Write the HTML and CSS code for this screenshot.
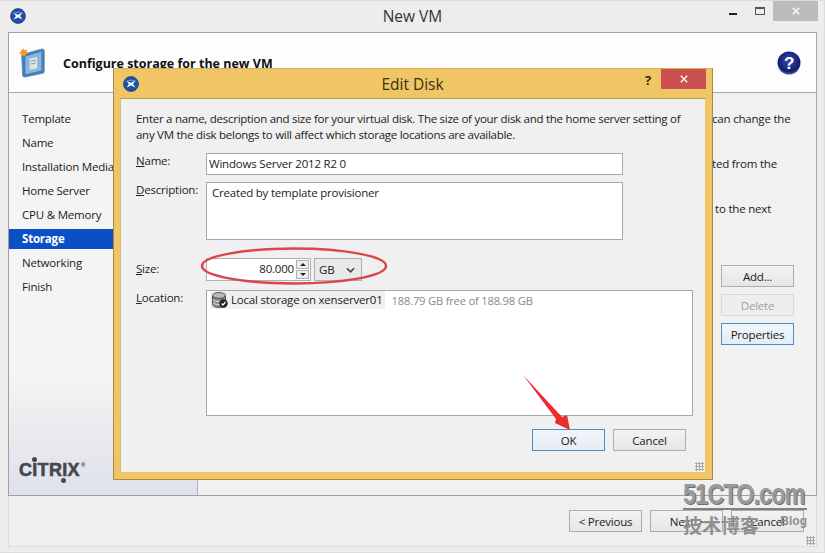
FILE: index.html
```html
<!DOCTYPE html>
<html lang="en">
<head>
    <meta charset="UTF-8">
    <title>New VM</title>
    <link rel="stylesheet" href="styles.css">
</head>
<body>
    <!-- Main wizard window -->
    <div class="window">
        <div class="titlebar">
            <svg class="app-icon" viewBox="0 0 16 16">
                <use href="#xen-logo"></use>
            </svg>
            <span class="title">New VM</span>
            <div class="controls">
                <span class="ctl-min"></span>
                <span class="ctl-max"></span>
                <span class="ctl-close">
                    <svg viewBox="0 0 10 10"><path d="M1 1L9 9M9 1L1 9"></path></svg>
                </span>
            </div>
        </div>

        <div class="panel">
            <div class="page-head">
                <svg class="page-icon" viewBox="0 0 28 32">
                    <path d="M3 7L25 1Q27 1 27 3V25Q27 27 25 27L6 31Q4 31 4 29Z" fill="#3f7fc0" stroke="#6f8598"></path>
                    <path d="M7 9L24 4V24L7 28Z" fill="#86b8e2"></path>
                    <path d="M11 11L20 9V22L11 24Z" fill="#d9e4ea" stroke="#8fa3b3" stroke-width=".6"></path>
                    <path d="M13 14L18 13M13 17L18 16" stroke="#7d93a6"></path>
                    <path d="M5 0L6 2.500L9 1.500L8 4L10 5.500L7.500 6.500L7 9L4.500 8L2 9L2.500 6.500L0 5L2.500 4L2 1.500L4 2.500Z" fill="#f09a2a"></path>
                </svg>
                <h1>Configure storage for the new VM</h1>
                <svg class="help-icon" viewBox="0 0 24 24">
                    <defs>
                        <radialGradient id="helpball" cx=".5" cy=".4" r=".6">
                            <stop offset="0" stop-color="#3a4fb0"></stop>
                            <stop offset=".8" stop-color="#101d72"></stop>
                            <stop offset="1" stop-color="#5a6a98"></stop>
                        </radialGradient>
                    </defs>
                    <circle cx="12" cy="12" r="11.5" fill="url(#helpball)"></circle>
                    <text x="12" y="18" text-anchor="middle" class="help-mark">?</text>
                </svg>
            </div>

            <div class="page-body">
                <div class="sidebar">
                    <ul class="steps">
                        <li>Template</li>
                        <li>Name</li>
                        <li>Installation Media</li>
                        <li>Home Server</li>
                        <li>CPU &amp; Memory</li>
                        <li class="active">Storage</li>
                        <li>Networking</li>
                        <li>Finish</li>
                    </ul>
                    <div class="citrix">
                        <span class="dot-top"></span>CITRIX<span class="dot-bottom"></span><sup>®</sup>
                    </div>
                </div>
                <div class="content">
                    <p class="hint">can change the</p>
                    <p class="hint hint-b">ted from the</p>
                    <p class="hint hint-c">to the next</p>
                    <div class="side-buttons">
                        <button class="btn">Add...</button>
                        <button class="btn disabled">Delete</button>
                        <button class="btn focus">Properties</button>
                    </div>
                </div>
            </div>
        </div>

        <div class="footer">
            <button class="btn">&lt; Previous</button>
            <button class="btn">Next &gt;</button>
            <button class="btn">Cancel</button>
            <span class="grip"></span>
        </div>
    </div>

    <!-- Edit Disk dialog, floats over the wizard -->
    <div class="dialog">
        <div class="dialog-title">
            <svg class="app-icon" viewBox="0 0 16 16">
                <use href="#xen-logo"></use>
            </svg>
            <span class="title">Edit Disk</span>
            <span class="dlg-help">?</span>
            <span class="dlg-close">
                <svg viewBox="0 0 10 10"><path d="M1 1L9 9M9 1L1 9"></path></svg>
            </span>
        </div>
        <div class="dialog-body">
            <p class="intro">Enter a name, description and size for your virtual disk. The size of your disk and the home server setting of any VM the disk belongs to will affect which storage locations are available.</p>
            <div class="form">
                <label><u>N</u>ame:</label>
                <div class="field field-name">Windows Server 2012 R2 0</div>
                <label><u>D</u>escription:</label>
                <div class="field field-desc">Created by template provisioner</div>
                <label class="label-size"><u>S</u>ize:</label>
                <div class="size-row">
                    <div class="spin">
                        <span class="spin-value">80.000</span>
                        <span class="spin-arrows"><i class="up"></i><i class="down"></i></span>
                    </div>
                    <div class="select">GB
                        <svg viewBox="0 0 10 6"><path d="M1 1L5 5L9 1"></path></svg>
                    </div>
                </div>
                <label class="label-loc"><u>L</u>ocation:</label>
                <div class="field field-loc">
                    <div class="loc-row">
                        <span class="loc-name">
                            <svg class="disk-icon" viewBox="0 0 16 16">
                                <ellipse cx="7" cy="3.5" rx="6.5" ry="3" fill="#b9b9b9" stroke="#555"></ellipse>
                                <path d="M.5 3.5V12.5C.5 14 3 15.5 7 15.5S13.500 14 13.500 12.500V3.500C13.500 5 11 6.500 7 6.500S.5 5 .5 3.500Z" fill="#8c8c8c" stroke="#555"></path>
                                <path d="M1 8C3 10 11 10 13 8M1 11C3 13 11 13 13 11" fill="none" stroke="#e0e0e0"></path>
                                <circle cx="11.500" cy="11.500" r="4.200" fill="#222"></circle>
                                <path d="M9.500 11.500L11 13L13.500 10" fill="none" stroke="#fff" stroke-width="1.200"></path>
                            </svg>
                            Local storage on xenserver01
                        </span>
                        <span class="loc-free">188.79 GB free of 188.98 GB</span>
                    </div>
                </div>
            </div>
            <div class="dialog-buttons">
                <button class="btn focus">OK</button>
                <button class="btn">Cancel</button>
            </div>
            <span class="grip"></span>
        </div>
    </div>

    <!-- Red annotations drawn on top of the screenshot -->
    <svg class="annotations" viewBox="0 0 825 553">
        <ellipse cx="294" cy="266" rx="92" ry="17.500" fill="none" stroke="#d9474a" stroke-width="2.500"></ellipse>
        <path d="M523 375L556 419L555 423L570 430L567 415L562 417Z" fill="#ee2c2f"></path>
    </svg>

    <!-- Watermark -->
    <div class="watermark">
        <div class="wm-top"><span>51CTO.com</span></div>
        <div class="wm-bottom"><span>技术博客</span><span class="wm-blog">Blog</span></div>
    </div>

    <svg class="defs">
        <symbol id="xen-logo" viewBox="0 0 16 16">
            <circle cx="8" cy="8" r="7.500" fill="#1c4fa8" stroke="#12306e" stroke-width=".6"></circle>
            <path d="M1.500 6Q8 1 14.500 6Q8 3.500 1.500 6Z" fill="#6f97d8"></path>
            <path d="M3.500 5L8 6.800L12.500 4.500L10 8L12.500 11.500L8 9.500L3.500 11.500L6 8Z" fill="#fff"></path>
        </symbol>
    </svg>
</body>
</html>
```

FILE: styles.css
```css
/* General */
html, body {
    margin: 0;
    padding: 0;
}
body {
    position: relative;
    width: 825px;
    height: 553px;
    overflow: hidden;
    font-family: "Open Sans", Arial, sans-serif;
    font-size: 11.5px;
    letter-spacing: -.2px;
    color: #1a1a1a;
    background-color: #e3e3e3;
}
.defs {
    position: absolute;
    width: 0;
    height: 0;
}
.btn {
    width: 73px;
    height: 22px;
    padding: 0;
    border: 1px solid #adadad;
    background: linear-gradient(#f2f2f2, #e6e6e6);
    font-family: inherit;
    font-size: 11.5px;
    letter-spacing: -.2px;
    color: #1a1a1a;
}
.btn.focus {
    border-color: #4f8ec4;
    background: linear-gradient(#f0f5f9, #e5edf3);
}
.btn.disabled {
    border-color: #d9d9d9;
    background: #eeeeee;
    color: #a0a0a0;
}
.grip {
    position: absolute;
    right: 1px;
    bottom: 1px;
    width: 9px;
    height: 9px;
    background-image: radial-gradient(#a8a8a8 1px, transparent 1.200px);
    background-size: 3px 3px;
}

/* Main window */
.window {
    display: flex;
    flex-direction: column;
    height: 553px;
    box-sizing: border-box;
    padding: 1px 7px 5px 8px;
    background-color: #ededed;
    border: 1px solid #dcdcdc;
    border-left: 0;
}
.titlebar {
    position: relative;
    flex: none;
    height: 30px;
    text-align: center;
}
.titlebar .app-icon {
    position: absolute;
    left: 2px;
    top: 6px;
}
.app-icon {
    width: 16px;
    height: 16px;
}
.title {
    font-size: 15.500px;
    letter-spacing: 0;
    line-height: 28px;
    color: #333;
}
.controls {
    position: absolute;
    right: -1px;
    top: -1px;
    display: flex;
    align-items: flex-start;
}
.ctl-min {
    width: 8px;
    height: 2px;
    margin: 12px 18px 0 0;
    background-color: #222;
}
.ctl-max {
    width: 8px;
    height: 5px;
    margin: 6px 8px 0 0;
    border: 1px solid #555;
    border-top-width: 2px;
}
.ctl-close {
    display: flex;
    align-items: center;
    justify-content: center;
    width: 45px;
    height: 20px;
    background-color: #bcbcbc;
}
.ctl-close svg, .dlg-close svg {
    width: 8px;
    height: 8px;
}
.ctl-close path, .dlg-close path {
    stroke: #fff;
    stroke-width: 1.600;
}
.panel {
    display: flex;
    flex-direction: column;
    flex: none;
    height: 464px;
    border: 1px solid #a0a0a0;
    border-right-color: #a8a8a8;
    box-sizing: border-box;
    background-color: #f1f1f1;
}
.page-head {
    display: flex;
    align-items: center;
    flex: none;
    height: 60px;
    box-sizing: border-box;
    padding: 0 15px 0 9px;
    background-color: #fdfdfd;
    border-bottom: 1px solid #a8a8a8;
}
.page-icon {
    width: 28px;
    height: 30px;
    margin-right: 17px;
}
.page-head h1 {
    flex: 1;
    margin: 2px 0 0;
    font-size: 12.500px;
    font-weight: 700;
    letter-spacing: 0;
    color: #111;
}
.help-icon {
    width: 24px;
    height: 24px;
}
.help-mark {
    font-family: "Liberation Sans", Arial, sans-serif;
    font-size: 17px;
    font-weight: 700;
    fill: #fff;
}
.page-body {
    display: flex;
    flex: 1;
    min-height: 0;
}
.sidebar {
    position: relative;
    flex: none;
    width: 188px;
    border-right: 1px solid #b5b5b5;
    background: linear-gradient(#f4f4f4 70%, #dfe1ea);
}
.steps {
    list-style: none;
    margin: 0;
    padding: 14px 0 0;
}
.steps li {
    height: 24px;
    padding-left: 13px;
    line-height: 24px;
    color: #222;
}
.steps li.active {
    height: 20px;
    margin: 2px 0;
    line-height: 20px;
    background-color: #0a50c4;
    color: #fff;
    font-weight: 700;
}
.citrix {
    position: absolute;
    left: 10px;
    bottom: 15px;
    font-family: "Liberation Sans", Arial, sans-serif;
    font-size: 18px;
    font-weight: 700;
    line-height: 20px;
    letter-spacing: .3px;
    color: #45484e;
    -webkit-text-stroke: .6px #45484e;
}
.citrix sup {
    position: absolute;
    left: 62px;
    top: 2px;
    font-size: 6px;
    line-height: 6px;
    letter-spacing: 0;
    -webkit-text-stroke: 0;
}
.dot-top, .dot-bottom {
    position: absolute;
    width: 5px;
    height: 5px;
    border-radius: 50%;
    background-color: #45484e;
}
.dot-top {
    left: 13px;
    top: -3px;
}
.dot-bottom {
    left: 42px;
    bottom: -3px;
}
.content {
    flex: 1;
    padding-top: 17px;
}
.hint {
    margin: 0 0 27px;
    padding-left: 514px;
    line-height: 18px;
    white-space: nowrap;
}
.hint-c {
    padding-left: 517px;
}
.side-buttons {
    display: flex;
    flex-direction: column;
    gap: 7px;
    margin: 47px 0 0 523px;
}
.footer {
    position: relative;
    display: flex;
    flex: 1;
    justify-content: flex-end;
    gap: 8px;
    padding: 14px 12px 0 0;
    border: 1px solid #dcdcdc;
    border-top: 0;
    background-color: #efefef;
}

/* Edit Disk dialog */
.dialog {
    position: absolute;
    left: 113px;
    top: 68px;
    width: 600px;
    height: 412px;
    box-sizing: border-box;
    padding: 0 7px 7px 6px;
    background-color: #efc566;
    border: 1px solid #a58a4c;
    border-top-color: #d8b058;
}
.dialog-title {
    position: relative;
    height: 29px;
    text-align: center;
}
.dialog-title .app-icon {
    position: absolute;
    left: 3px;
    top: 7px;
}
.dialog-title .title {
    color: #3a2e10;
    line-height: 30px;
}
.dlg-help {
    position: absolute;
    right: 54px;
    top: 2px;
    font-size: 13px;
    font-weight: 700;
    line-height: 18px;
    color: #3a2a05;
}
.dlg-close {
    position: absolute;
    right: -1px;
    top: 0;
    display: flex;
    align-items: center;
    justify-content: center;
    width: 45px;
    height: 20px;
    background-color: #c9504f;
}
.dialog-body {
    position: relative;
    height: 374px;
    box-sizing: border-box;
    padding: 12px 12px 0 15px;
    background-color: #f0f0f0;
    border-top: 1px solid #b39a5c;
    border-left: 1px solid #d6bc7c;
}
.intro {
    margin: 0;
    width: 552px;
    line-height: 16px;
    letter-spacing: -.27px;
    color: #222;
}
.form {
    display: grid;
    grid-template-columns: 70px 487px;
    grid-template-rows: 22px 58px 34px 128px;
    row-gap: 7px;
    margin-top: 10px;
}
.form label {
    line-height: 16px;
    color: #222;
}
.form .label-size {
    align-self: end;
    padding-bottom: 4px;
}
.form .label-loc {
    padding-top: 2px;
}
.field {
    box-sizing: border-box;
    border: 1px solid #a8a8a8;
    background-color: #fff;
    color: #222;
}
.field-name {
    width: 417px;
    padding-left: 2px;
    line-height: 20px;
}
.field-desc {
    width: 417px;
    padding: 2px 5px;
    line-height: 16px;
}
.field-loc {
    margin-top: 2px;
    padding: 0 3px;
}
.size-row {
    display: flex;
    align-self: end;
    gap: 3px;
    height: 23px;
}
.spin {
    display: flex;
    justify-content: flex-end;
    box-sizing: border-box;
    width: 105px;
    padding: 1px;
    border: 1px solid #b0b0b0;
    background-color: #fff;
}
.spin-value {
    padding-right: 1px;
    line-height: 18px;
}
.spin-arrows {
    display: flex;
    flex-direction: column;
    gap: 1px;
    width: 13px;
    margin-left: 1px;
}
.spin-arrows i {
    flex: 1;
    border: 1px solid #b0b0b0;
    background-color: #eeeeee;
    position: relative;
}
.spin-arrows i::after {
    content: "";
    position: absolute;
    left: 3px;
    top: 2px;
    border-left: 3px solid transparent;
    border-right: 3px solid transparent;
}
.spin-arrows .up::after {
    border-bottom: 3px solid #222;
}
.spin-arrows .down::after {
    border-top: 3px solid #222;
}
.select {
    display: flex;
    align-items: center;
    justify-content: space-between;
    box-sizing: border-box;
    width: 48px;
    padding: 0 3px 0 4px;
    border: 1px solid #b0b0b0;
    background-color: #e9e9e9;
}
.select svg {
    width: 9px;
    height: 6px;
    margin-right: 3px;
}
.select path {
    fill: none;
    stroke: #444;
    stroke-width: 1.800;
}
.loc-row {
    display: flex;
    align-items: center;
}
.loc-name {
    display: flex;
    align-items: center;
    gap: 3px;
    padding: 0 2px;
    line-height: 18px;
    background-color: #f0f0f0;
    color: #222;
}
.disk-icon {
    width: 16px;
    height: 16px;
}
.loc-free {
    margin-left: 7px;
    font-size: 11.200px;
    color: #8a8a8a;
}
.dialog-buttons {
    display: flex;
    justify-content: flex-end;
    gap: 8px;
    margin: 13px 7px 0 0;
}

/* Annotations */
.annotations {
    position: absolute;
    left: 0;
    top: 0;
    width: 825px;
    height: 553px;
}

/* Watermark */
.watermark {
    position: absolute;
    left: 683px;
    top: 481px;
    width: 124px;
    color: #8f8f8f;
}
.wm-top {
    height: 27px;
    font-family: "Liberation Sans", Arial, sans-serif;
    font-size: 26px;
    font-weight: 700;
    line-height: 27px;
    letter-spacing: -1px;
    white-space: nowrap;
    color: #9a9a9a;
    border-bottom: 2px solid #7f7f7f;
    text-shadow: 1px 1px 0 #6f6f6f;
}
.wm-top span {
    display: block;
    transform: scale(.9, 1.15);
    transform-origin: left center;
}
.wm-bottom {
    display: flex;
    justify-content: space-between;
    align-items: center;
    margin-top: 3px;
    font-family: "Noto Sans CJK SC", sans-serif;
    font-size: 19px;
    font-weight: 700;
    line-height: 24px;
    letter-spacing: 0;
}
.wm-blog {
    margin-top: -8px;
    font-family: "Liberation Sans", Arial, sans-serif;
    font-size: 12px;
}
```
